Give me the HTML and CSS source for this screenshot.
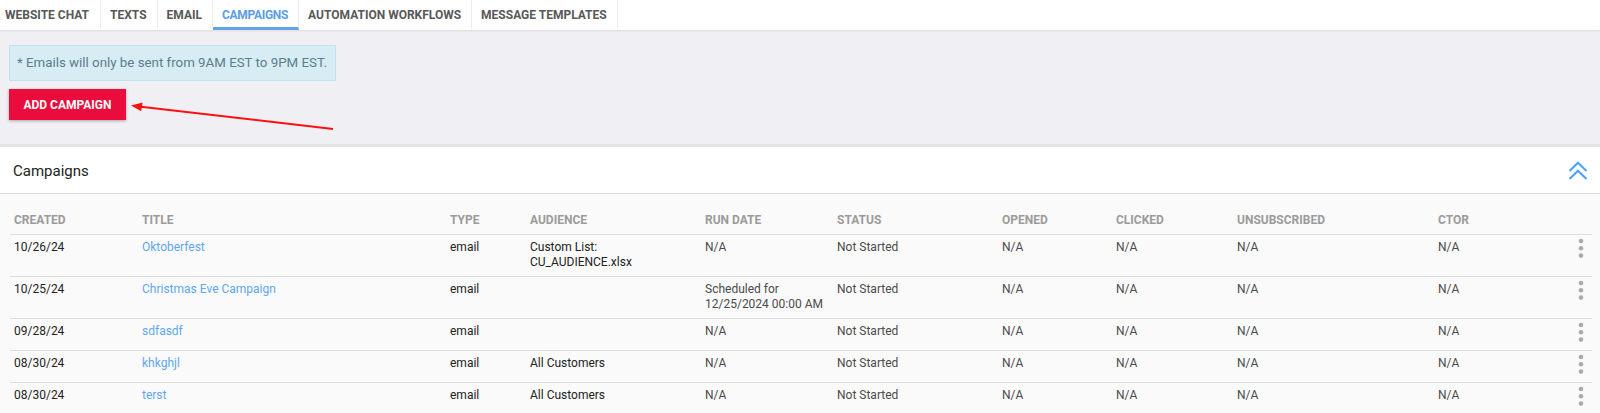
FILE: index.html
```html
<!DOCTYPE html>
<html>
<head>
<meta charset="utf-8">
<link rel="stylesheet" href="styles.css">
</head>
<body>
<nav class="tabs">
  <a class="tab first">WEBSITE CHAT</a>
  <a class="tab">TEXTS</a>
  <a class="tab">EMAIL</a>
  <a class="tab active">CAMPAIGNS</a>
  <a class="tab">AUTOMATION WORKFLOWS</a>
  <a class="tab">MESSAGE TEMPLATES</a>
</nav>
<section class="top">
  <div class="note">* Emails will only be sent from 9AM EST to 9PM EST.</div>
  <button class="add-btn">ADD CAMPAIGN</button>
  <svg class="annot" width="400" height="114" viewBox="0 0 400 114">
    <line x1="333" y1="99" x2="141" y2="76.8" stroke="#ff1010" stroke-width="2"/>
    <polygon points="131,75.5 142.6,72.4 141.2,81.2" fill="#ff1010"/>
  </svg>
</section>
<section class="panel">
  <header class="panel-head">
    <span class="panel-title">Campaigns</span>
    <svg class="collapse" width="20" height="20" viewBox="0 0 20 20">
      <path d="M1.5 10 L10 1.8 L18.5 10" fill="none" stroke="#4ea4f6" stroke-width="2.2"/>
      <path d="M1.5 18 L10 9.8 L18.5 18" fill="none" stroke="#4ea4f6" stroke-width="2.2"/>
    </svg>
  </header>
  <div class="table-wrap">
    <table class="grid">
      <colgroup>
        <col style="width:128px"><col style="width:308px"><col style="width:80px"><col style="width:175px"><col style="width:132px"><col style="width:165px"><col style="width:114px"><col style="width:121px"><col style="width:201px"><col style="width:131px"><col style="width:27px">
      </colgroup>
      <thead>
        <tr><th>CREATED</th><th>TITLE</th><th>TYPE</th><th>AUDIENCE</th><th>RUN DATE</th><th>STATUS</th><th>OPENED</th><th>CLICKED</th><th>UNSUBSCRIBED</th><th>CTOR</th><th></th></tr>
      </thead>
      <tbody>
        <tr>
          <td class="dark">10/26/24</td><td><a class="link">Oktoberfest</a></td><td class="dark">email</td><td class="dark">Custom List:<br>CU_AUDIENCE.xlsx</td><td>N/A</td><td>Not Started</td><td>N/A</td><td>N/A</td><td>N/A</td><td>N/A</td>
          <td class="menu"><svg width="20" height="28" viewBox="0 0 20 28"><circle cx="10" cy="6" r="2.3"/><circle cx="10" cy="13.3" r="2.3"/><circle cx="10" cy="20.6" r="2.3"/></svg></td>
        </tr>
        <tr>
          <td class="dark">10/25/24</td><td><a class="link">Christmas Eve Campaign</a></td><td class="dark">email</td><td class="dark"></td><td>Scheduled for<br>12/25/2024 00:00 AM</td><td>Not Started</td><td>N/A</td><td>N/A</td><td>N/A</td><td>N/A</td>
          <td class="menu"><svg width="20" height="28" viewBox="0 0 20 28"><circle cx="10" cy="6" r="2.3"/><circle cx="10" cy="13.3" r="2.3"/><circle cx="10" cy="20.6" r="2.3"/></svg></td>
        </tr>
        <tr>
          <td class="dark">09/28/24</td><td><a class="link">sdfasdf</a></td><td class="dark">email</td><td class="dark"></td><td>N/A</td><td>Not Started</td><td>N/A</td><td>N/A</td><td>N/A</td><td>N/A</td>
          <td class="menu"><svg width="20" height="28" viewBox="0 0 20 28"><circle cx="10" cy="6" r="2.3"/><circle cx="10" cy="13.3" r="2.3"/><circle cx="10" cy="20.6" r="2.3"/></svg></td>
        </tr>
        <tr>
          <td class="dark">08/30/24</td><td><a class="link">khkghjl</a></td><td class="dark">email</td><td class="dark">All Customers</td><td>N/A</td><td>Not Started</td><td>N/A</td><td>N/A</td><td>N/A</td><td>N/A</td>
          <td class="menu"><svg width="20" height="28" viewBox="0 0 20 28"><circle cx="10" cy="6" r="2.3"/><circle cx="10" cy="13.3" r="2.3"/><circle cx="10" cy="20.6" r="2.3"/></svg></td>
        </tr>
        <tr>
          <td class="dark">08/30/24</td><td><a class="link">terst</a></td><td class="dark">email</td><td class="dark">All Customers</td><td>N/A</td><td>Not Started</td><td>N/A</td><td>N/A</td><td>N/A</td><td>N/A</td>
          <td class="menu"><svg width="20" height="28" viewBox="0 0 20 28"><circle cx="10" cy="6" r="2.3"/><circle cx="10" cy="13.3" r="2.3"/><circle cx="10" cy="20.6" r="2.3"/></svg></td>
        </tr>
      </tbody>
    </table>
  </div>
</section>
</body>
</html>
```
FILE: styles.css
```css
* { box-sizing: border-box; }
html, body { margin: 0; padding: 0; }
body {
  width: 1600px;
  height: 413px;
  overflow: hidden;
  font-family: Roboto, "Liberation Sans", sans-serif;
  background: #efeff4;
  color: #333;
}

.tabs {
  position: relative;
  z-index: 2;
  display: flex;
  height: 30px;
  background: #fff;
  box-shadow: 0 1px 2px rgba(0,0,0,0.08);
}
.tab {
  display: flex;
  align-items: center;
  padding: 3px 10px 0 9px;
  border-right: 1px solid #ececec;
  border-bottom: 3px solid transparent;
  font-size: 12px;
  font-weight: 700;
  color: #585858;
}
.tab.first { padding-left: 5px; padding-right: 11px; }
.tab.active {
  color: #5b9de8;
  border-bottom-color: #62a3ec;
  letter-spacing: -0.3px;
}

.top {
  position: relative;
  display: flex;
  flex-direction: column;
  align-items: flex-start;
  padding: 15px 9px 24px;
  height: 114px;
}
.note {
  background: #d8ecf4;
  border: 1px solid #c0e1ee;
  color: #5a7d90;
  font-size: 13.3px;
  line-height: 20px;
  padding: 7px 8px 7px 7px;
}
.add-btn {
  margin-top: 8px;
  height: 31px;
  width: 117px;
  padding: 0;
  border: none;
  background: #ea0c3c;
  color: #fff;
  font-family: Roboto, "Liberation Sans", sans-serif;
  font-size: 12px;
  font-weight: 700;
  box-shadow: 0 1px 3px rgba(0,0,0,0.3);
}
.annot {
  position: absolute;
  left: 0;
  top: 0;
}

.panel {
  background: #fafafa;
  border-top: 3px solid #e3e3e8;
}
.panel-head {
  display: flex;
  align-items: center;
  justify-content: space-between;
  height: 47px;
  padding: 1px 12px 0 13px;
  background: #fff;
  border-bottom: 1px solid #dcdcdc;
}
.panel-title {
  font-size: 15px;
  color: #222;
}
.collapse { display: block; }

.table-wrap {
  padding: 12px 8px 0 10px;
}
.grid {
  width: 1582px;
  table-layout: fixed;
  border-collapse: collapse;
  font-size: 12px;
  line-height: 15px;
}
.grid th {
  text-align: left;
  font-weight: 700;
  color: #9b9b9b;
  padding: 7px 4px 6px;
  border-bottom: 1px solid #dcdcdc;
  white-space: nowrap;
}
.grid td {
  vertical-align: top;
  padding: 5px 4px 6px;
  color: #4a4a4a;
  border-bottom: 1px solid #dcdcdc;
}
.grid td.dark { color: #222; }
.grid td.menu {
  padding: 0 0 3px 6px;
}
.grid td.menu svg {
  display: block;
  fill: #ababab;
}
.link { color: #5ea7f0; }
```
